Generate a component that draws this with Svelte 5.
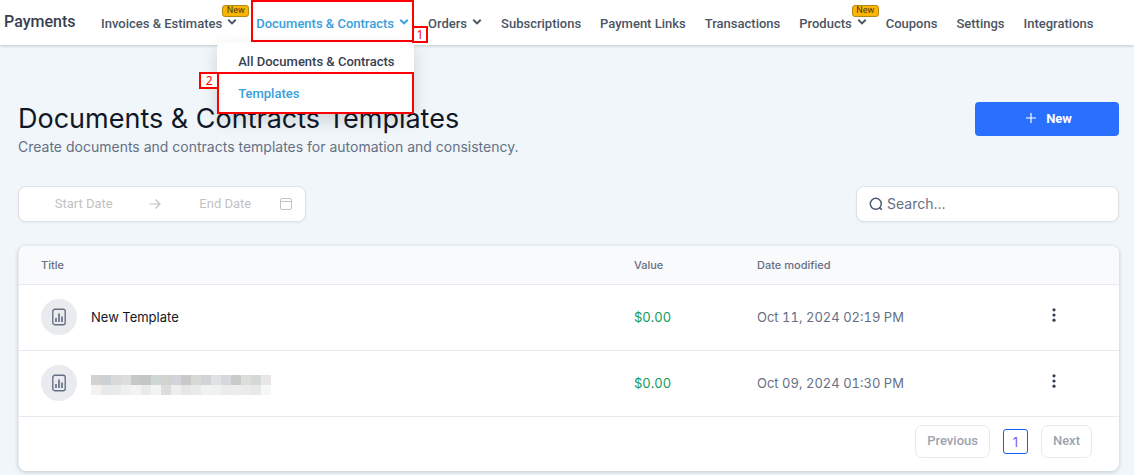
<script>
  const nav = [
    { label: 'Invoices & Estimates', menu: true, badge: true },
    { label: 'Documents & Contracts', menu: true, active: true },
    { label: 'Orders', menu: true },
    { label: 'Subscriptions' },
    { label: 'Payment Links' },
    { label: 'Transactions' },
    { label: 'Products', menu: true, badge: true },
    { label: 'Coupons' },
    { label: 'Settings' },
    { label: 'Integrations' }
  ];
  const rows = [
    { title: 'New Template', value: '$0.00', date: 'Oct 11, 2024 02:19 PM' },
    { title: '', value: '$0.00', date: 'Oct 09, 2024 01:30 PM' }
  ];
  const mosaic = [
    ['#d3d2d0', '#cdd1d6', '#d9d9da', '#dcdddf', '#c5c9c5', '#c4c6c6', '#cfd6d6', '#d1d3ce', '#d2d4da', '#c9c9cc', '#d6d9d5', '#d1d3d7', '#e1e2e2', '#d6d8de', '#c8cbca', '#dcdeda', '#d4d8d9', '#e8e6e7'],
    ['#f3f2f1', '#e7e9eb', '#e9eaea', '#eff0f0', '#f3f3f3', '#e9ebea', '#f2f4f3', '#dcdcdd', '#eeeef0', '#e6e6e7', '#e9eaea', '#f1f3f3', '#eff0f0', '#ebebed', '#ededee', '#eaebea', '#e6e8ea', '#f5f8f7']
  ];
</script>

<header>
  <span class="brand">Payments</span>
  <nav>
    {#each nav as item}
      <div class="item" class:marked={item.active}>
        <a href="#top" class:active={item.active}>
          {item.label}
          {#if item.menu}
            <svg class="chev" width="10" height="8" viewBox="0 0 10 8" aria-hidden="true"><path d="M1.3 1.800 5 5.400l3.700-3.600" fill="none" stroke="currentColor" stroke-width="2" /></svg>
          {/if}
        </a>
        {#if item.badge}<span class="badge">New</span>{/if}
        {#if item.active}
          <span class="callout one">1</span>
          <div class="dropdown">
            <a href="#all">All Documents &amp; Contracts</a>
            <a href="#templates" class="active current">Templates</a>
            <span class="callout two">2</span>
          </div>
        {/if}
      </div>
    {/each}
  </nav>
</header>

<main>
  <div class="heading">
    <div>
      <h1>Documents &amp; Contracts Templates</h1>
      <p>Create documents and contracts templates for automation and consistency.</p>
    </div>
    <button class="new">
      <svg width="10" height="10" viewBox="0 0 10 10" aria-hidden="true"><path d="M5 0v10M0 5h10" stroke="currentColor" stroke-width="1.2" /></svg>
      New
    </button>
  </div>

  <div class="filters">
    <div class="range">
      <input aria-label="Start date" placeholder="Start Date" />
      <svg class="arrow" width="12" height="12" viewBox="0 0 12 12" aria-hidden="true"><path d="M.5 6h10.500M6.500 1.500 11 6l-4.500 4.500" fill="none" stroke="#c2c2c2" stroke-width="1.200" /></svg>
      <input aria-label="End date" placeholder="End Date" />
      <svg width="12" height="12" viewBox="0 0 12 12" aria-hidden="true"><rect x=".5" y=".5" width="11" height="11" rx="1.500" fill="none" stroke="#c2c2c2" /><path d="M.5 3.500h11" stroke="#c2c2c2" /></svg>
    </div>
    <label class="search">
      <svg width="14" height="14" viewBox="0 0 14 14" aria-hidden="true"><circle cx="6.800" cy="6.800" r="5.500" fill="none" stroke="#475467" stroke-width="1.400" /><path d="m10.600 10.600 2.200 2.200" stroke="#475467" stroke-width="1.500" /></svg>
      <input type="search" aria-label="Search" placeholder="Search..." />
    </label>
  </div>

  <section class="card">
    <table>
      <thead>
        <tr><th class="c-title">Title</th><th class="c-value">Value</th><th class="c-date">Date modified</th><th class="c-act"></th></tr>
      </thead>
      <tbody>
        {#each rows as row}
          <tr>
            <td>
              <div class="name">
                <span class="avatar">
                  <svg width="14" height="18" viewBox="0 0 14 18" fill="none" stroke="#667085" aria-hidden="true"><rect x=".8" y="1.300" width="12.400" height="15.400" rx="2" stroke-width="1.400" /><path d="M4 14v-4M7 14V5.500M10 14V8.500" stroke-width="1.700" /></svg>
                </span>
                {#if row.title}
                  {row.title}
                {:else}
                  <span class="mosaic">
                    {#each mosaic.flat() as color}<i style:background={color}></i>{/each}
                  </span>
                {/if}
              </div>
            </td>
            <td class="money">{row.value}</td>
            <td>{row.date}</td>
            <td>
              <button class="more" aria-label="More actions">
                <svg width="4" height="14" viewBox="0 0 4 14" fill="#344054" aria-hidden="true"><circle cx="2" cy="1.800" r="1.600" /><circle cx="2" cy="7" r="1.600" /><circle cx="2" cy="12.200" r="1.600" /></svg>
              </button>
            </td>
          </tr>
        {/each}
      </tbody>
    </table>
    <footer>
      <button class="page">Previous</button>
      <button class="num">1</button>
      <button class="page">Next</button>
    </footer>
  </section>
</main>

<style>
  :global(body) {
    background: #f0f6f9;
    font-family: Inter, sans-serif;
    color: #667085;
  }
  * { box-sizing: border-box; }
  button, input { font: inherit; }
  header {
    display: flex;
    align-items: center;
    height: 45px;
    padding-left: 4px;
    background: #fff;
    box-shadow: 0 1px 3px rgba(16, 24, 40, 0.2);
    font-family: Roboto, sans-serif;
    position: relative;
    z-index: 1;
  }
  .brand {
    width: 92px;
    font-size: 16px;
    font-weight: 500;
    line-height: 20px;
    padding-bottom: 2px;
    color: #374151;
  }
  nav { display: flex; gap: 9px; height: 100%; }
  .item { position: relative; height: 42px; padding: 4px 5px 0; }
  nav a {
    display: flex;
    align-items: center;
    gap: 5px;
    height: 100%;
    color: #4b5563;
    font-size: 13px;
    font-weight: 500;
    text-decoration: none;
    white-space: nowrap;
  }
  nav a.active { color: #38a0db; }
  .chev { margin-bottom: 3px; }
  .marked { outline: 2px solid #f00; outline-offset: -2px; }
  .badge {
    position: absolute;
    right: -7px;
    top: 5px;
    width: 27px;
    height: 12px;
    border: 1px solid #b58a10;
    border-radius: 3px;
    background: #fdb505;
    color: #4a3a10;
    font-size: 9px;
    line-height: 9px;
    text-align: center;
  }
  .callout {
    position: absolute;
    height: 17px;
    border: 2px solid #f00;
    background: #fff;
    color: #f00;
    font: 12px/13px "Noto Sans", sans-serif;
    text-align: center;
  }
  .one { left: 100%; top: 26px; width: 16px; margin-left: -2px; }
  .two { right: 100%; top: 30px; width: 20px; margin-right: -2px; }
  .dropdown {
    position: absolute;
    top: 42px;
    left: -34px;
    width: 197px;
    padding-top: 3px;
    border-radius: 6px 6px 0 0;
    background: #fff;
    box-shadow: 0 6px 16px rgba(16, 24, 40, 0.16);
  }
  .dropdown a { height: 32px; padding-left: 21px; }
  .dropdown a:first-child { color: #374151; }
  .dropdown .current {
    height: 42px;
    padding-left: 19px;
    margin-top: -5px;
    border: 2px solid #f00;
  }
  main { padding: 57px 15px 4px 18px; }
  .heading { display: flex; justify-content: space-between; }
  h1 {
    margin: 0;
    font-size: 27px;
    font-weight: 400;
    line-height: 34px;
    color: #101828;
  }
  p { margin: 0; font-size: 14px; line-height: 22px; }
  .new {
    display: flex;
    align-items: center;
    justify-content: center;
    gap: 10px;
    width: 144px;
    height: 34px;
    padding: 0 0 2px 4px;
    border: 0;
    border-radius: 4px;
    background: #2970ff;
    color: #fff;
    font: 700 13px Roboto, sans-serif;
  }
  .filters { display: flex; justify-content: space-between; margin-top: 28px; }
  .range, .search {
    display: flex;
    align-items: center;
    height: 36px;
    border: 1px solid #dfe1e7;
    border-radius: 8px;
    background: #fff;
    box-shadow: 0 1px 2px rgba(16, 24, 40, 0.05);
  }
  .range { width: 288px; padding: 0 13px 0 10px; font: 13px Roboto, sans-serif; }
  .arrow { margin: 0 10px; }
  input { min-width: 0; border: 0; outline: 0; padding: 0 0 2px; background: none; }
  .range input { flex: 1; text-align: center; }
  .range input::placeholder { color: #c2c2c2; }
  .search { width: 263px; padding: 0 12px; gap: 4px; font-size: 14px; }
  .search input { flex: 1; }
  .search input::placeholder { color: #667085; }
  .card {
    margin-top: 24px;
    border-left: 1px solid #e9eaee;
    border-radius: 8px;
    background: #fff;
    box-shadow: 0 1px 4px rgba(16, 24, 40, 0.2);
    overflow: hidden;
  }
  table {
    width: 100%;
    border-collapse: collapse;
    table-layout: fixed;
    font-variant-numeric: tabular-nums;
  }
  th, td { padding: 0; text-align: left; border-bottom: 1px solid #e9eaee; }
  th { height: 38px; background: #f9fafc; font-size: 11px; font-weight: 500; }
  td { height: 66px; font-size: 13px; }
  th:first-child, td:first-child { padding-left: 22px; }
  .c-value { width: 123px; }
  .c-date { width: 291px; }
  .c-act { width: 71px; }
  .name { display: flex; align-items: center; gap: 14px; color: #101828; }
  .avatar {
    display: grid;
    place-items: center;
    width: 36px;
    height: 36px;
    border-radius: 50%;
    background: #eaebef;
  }
  .mosaic {
    display: grid;
    grid-template-columns: repeat(18, 10px);
    grid-auto-rows: 10px;
    padding-top: 4px;
  }
  .money { color: #149a5b; }
  .more { display: grid; place-items: center; padding: 4px 4px 8px; border: 0; background: none; }
  footer {
    display: flex;
    align-items: center;
    justify-content: flex-end;
    gap: 13px;
    height: 54px;
    padding: 0 27px 4px 0;
  }
  footer button { background: #fff; }
  .page {
    height: 33px;
    padding: 0 11px 2px;
    border: 1px solid #e9eaee;
    border-radius: 7px;
    color: #9da3ae;
    font: 500 13px Roboto, sans-serif;
  }
  .num {
    width: 25px;
    height: 25px;
    padding: 0;
    border: 1px solid #155eef;
    border-radius: 3px;
    color: #7a5af8;
    font-size: 13px;
  }
</style>
